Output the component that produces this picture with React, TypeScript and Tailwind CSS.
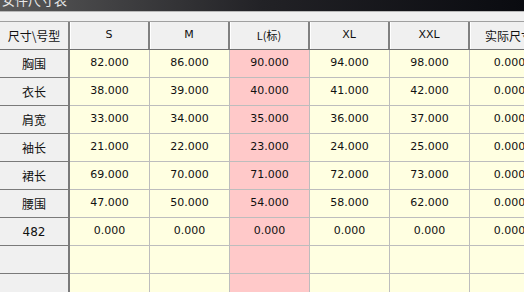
import React from "react";

const cols = ["S", "M", "L(标)", "XL", "XXL", "实际尺寸"];
const rows: [string, string[]][] = [
  ["胸围", ["82.000", "86.000", "90.000", "94.000", "98.000", "0.000"]],
  ["衣长", ["38.000", "39.000", "40.000", "41.000", "42.000", "0.000"]],
  ["肩宽", ["33.000", "34.000", "35.000", "36.000", "37.000", "0.000"]],
  ["袖长", ["21.000", "22.000", "23.000", "24.000", "25.000", "0.000"]],
  ["裙长", ["69.000", "70.000", "71.000", "72.000", "73.000", "0.000"]],
  ["腰围", ["47.000", "50.000", "54.000", "58.000", "62.000", "0.000"]],
  ["482", ["0.000", "0.000", "0.000", "0.000", "0.000", "0.000"]],
  ["", ["", "", "", "", "", ""]],
  ["", ["", "", "", "", "", ""]],
];

const font = { fontFamily: '"DejaVu Sans", "Noto Sans CJK SC", sans-serif' };
const cjk = { fontFamily: '"Noto Sans CJK SC", "DejaVu Sans", sans-serif' };

export default function App() {
  return (
    <div className="w-[524px] h-[292px] overflow-hidden bg-[#f0f0f0] text-[#111]">
      <div className="h-[11px] overflow-hidden bg-gradient-to-r from-[#5a5a5a] via-[#222226] to-[#0a0b10]">
        <div className="mt-[-8px] pl-[2px] text-[13px] leading-[16px] text-[#e8e8e8]" style={cjk}>
          女件尺寸表
        </div>
      </div>
      <div className="h-[10px] border-t border-[#b8b8b8] bg-[#f0f0f0]" />
      <div className="w-[550px] border-t border-[#a0a0a0]">
        <div className="flex h-[28px] border-b border-[#707070]">
          <div className="w-[70px] shrink-0 flex items-center justify-center border-r-2 border-[#808080] text-[12px]" style={cjk}>
            尺寸\号型
          </div>
          {cols.map((c, i) => (
            <div
              key={i}
              className={`w-[80px] shrink-0 flex items-center justify-center border-r-2 border-[#808080] shadow-[inset_1px_0_0_#ffffff] ${i === 5 ? "text-[12px]" : "text-[11px]"}`}
              style={i === 5 || i === 2 ? cjk : font}
            >
              {c}
            </div>
          ))}
        </div>
        {rows.map(([label, vals], r) => (
          <div key={r} className="flex h-[28px]">
            <div
              className="w-[70px] shrink-0 flex items-center justify-center border-r-2 border-b border-[#7a7a7a] bg-[#f0f0f0] text-[12px]"
              style={label === "482" ? font : cjk}
            >
              {label}
            </div>
            {vals.map((v, i) => (
              <div
                key={i}
                className={`w-[80px] shrink-0 flex items-center justify-center border-r border-b border-[#bdbdbd] text-[11px] ${i === 2 ? "bg-[#ffc9c9]" : "bg-[#ffffe1]"}`}
                style={font}
              >
                {v}
              </div>
            ))}
          </div>
        ))}
      </div>
    </div>
  );
}
